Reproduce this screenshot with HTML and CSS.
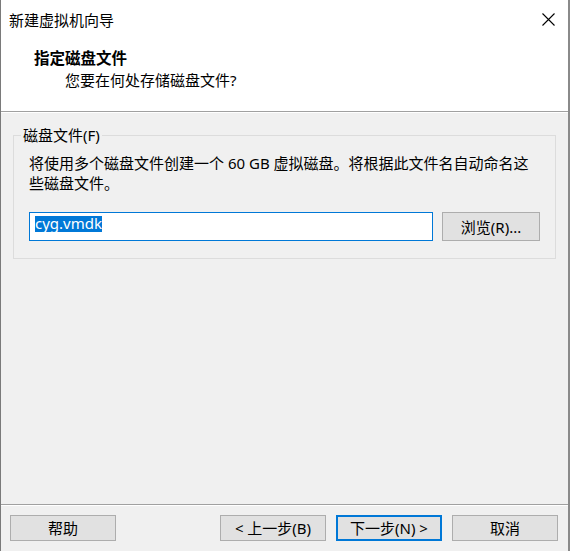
FILE: index.html
```html
<!DOCTYPE html>
<html lang="zh-CN">
<head>
<meta charset="utf-8">
<title>新建虚拟机向导</title>
<link rel="stylesheet" href="styles.css">
</head>
<body>
<div class="window">
  <div class="top">
    <div class="titlebar">
      <span class="title">新建虚拟机向导</span>
      <svg class="close" width="13" height="13" viewBox="0 0 13 13">
        <path d="M0.5 0.5 L12.5 12.5 M12.5 0.5 L0.5 12.5" stroke="#000" stroke-width="1.1" fill="none"/>
      </svg>
    </div>
    <div class="head">
      <div class="head-title">指定磁盘文件</div>
      <div class="head-sub">您要在何处存储磁盘文件?</div>
    </div>
  </div>
  <div class="main">
    <fieldset class="group">
      <legend class="group-label">磁盘文件(F)</legend>
      <p class="desc">将使用多个磁盘文件创建一个 60 GB 虚拟磁盘。将根据此文件名自动命名这些磁盘文件。</p>
      <div class="file-row">
        <div class="textbox"><span class="sel">cyg.vmdk</span></div>
        <div class="btn browse">浏览(R)...</div>
      </div>
    </fieldset>
  </div>
  <div class="footer">
    <div class="btn">帮助</div>
    <div class="spacer"></div>
    <div class="btn">&lt; 上一步(B)</div>
    <div class="btn default">下一步(N) &gt;</div>
    <div class="btn">取消</div>
  </div>
</div>
</body>
</html>
```

FILE: styles.css
```css
html, body {
  margin: 0;
  padding: 0;
}
body {
  width: 570px;
  height: 551px;
  overflow: hidden;
  font-family: "Noto Sans", "Noto Sans CJK SC", sans-serif;
  font-size: 15px;
  color: #000;
  background: #f0f0f0;
}
.window {
  box-sizing: border-box;
  width: 570px;
  height: 551px;
  display: flex;
  flex-direction: column;
  border-left: 1px solid #7a7a7a;
  border-right: 2px solid #8a8a8a;
  background: #f0f0f0;
}
.top {
  background: #fff;
  border-bottom: 1px solid #a0a0a0;
}
.titlebar {
  display: flex;
  align-items: center;
  justify-content: space-between;
  height: 20px;
  line-height: 20px;
  padding: 10px 13px 0 8px;
}
.close {
  display: block;
  margin-top: -1px;
}
.head {
  padding: 17px 0 21px 33px;
  line-height: 20px;
}
.head-title {
  font-weight: bold;
  font-size: 15.5px;
  height: 20px;
  margin-top: 1px;
}
.head-sub {
  margin-top: 2px;
  padding-left: 31px;
}
.main {
  flex: 1;
  padding: 13px 12px 0 12px;
  box-shadow: inset 0 1px 0 #fff;
}
.group {
  margin: 0;
  padding: 0 15px 17px 15px;
  border: 1px solid #dcdcdc;
  min-width: 0;
}
.group-label {
  margin-left: -8px;
  padding: 0 2px;
  line-height: 20px;
}
.desc {
  margin: 8px 0 0 0;
  line-height: 20px;
}
.file-row {
  display: flex;
  gap: 9px;
  margin-top: 19px;
}
.textbox {
  box-sizing: border-box;
  flex: 1;
  height: 29px;
  border: 1px solid #0078d7;
  background: #fff;
  padding: 3px 0 0 5px;
  display: flex;
  align-items: flex-start;
}
.sel {
  display: inline-block;
  height: 16px;
  line-height: 15px;
  background: #0078d7;
  color: #fff;
}
.btn {
  box-sizing: border-box;
  width: 106px;
  height: 26px;
  border: 1px solid #adadad;
  background: #e1e1e1;
  display: flex;
  align-items: center;
  justify-content: center;
  line-height: 20px;
  white-space: nowrap;
}
.browse {
  width: 98px;
  height: 29px;
}
.footer {
  display: flex;
  gap: 10px;
  padding: 10px 10px 10px 9px;
  border-top: 1px solid #a0a0a0;
  box-shadow: inset 0 1px 0 #fff;
}
.spacer {
  flex: 1;
}
.btn.default {
  border: 2px solid #0078d7;
}
```
